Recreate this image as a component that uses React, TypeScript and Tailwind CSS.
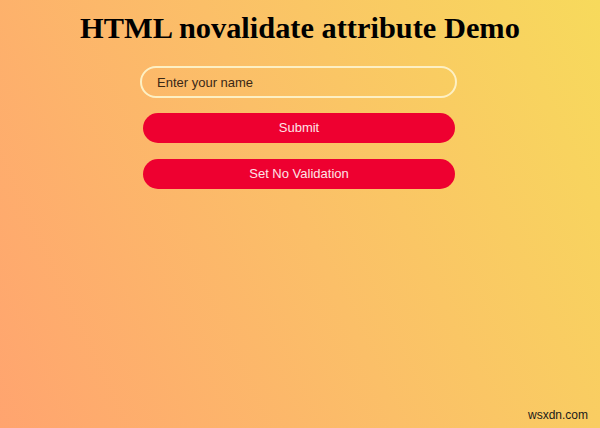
export default function App() {
  return (
    <div className="relative w-[600px] h-[428px] overflow-hidden bg-[linear-gradient(65deg,#ffa46f,#fbbf68_50%,#f7da5c)]">
      <div className="flex flex-col items-center">
        <h1 className="mt-[10px] text-[30.4px] leading-[36px] font-bold text-black" style={{ fontFamily: '"Liberation Serif", "Times New Roman", serif' }}>
          HTML novalidate attribute Demo
        </h1>
        <div className="mt-[20px] w-[317px] ml-[-3px] flex flex-col" style={{ fontFamily: '"Liberation Sans", Arial, sans-serif' }}>
          <input
            type="text"
            placeholder="Enter your name"
            className="h-[32px] w-[317px] rounded-full border-2 border-[#fdf0c4] bg-transparent px-[15px] text-[13px] text-[#3a2816] placeholder:text-[#3a2816] outline-none"
          />
          <button className="mt-[15px] ml-[3px] h-[30px] w-[312px] rounded-full bg-[#ee0030] text-[13px] text-[#fde4e8]">
            Submit
          </button>
          <button className="mt-[16px] ml-[3px] h-[30px] w-[312px] rounded-full bg-[#ee0030] text-[13px] text-[#fde4e8]">
            Set No Validation
          </button>
        </div>
      </div>
      <div className="absolute right-[12px] bottom-[4px] text-[12px] text-[#1a1a1a]" style={{ fontFamily: '"Liberation Sans", Arial, sans-serif' }}>
        wsxdn.com
      </div>
    </div>
  );
}
